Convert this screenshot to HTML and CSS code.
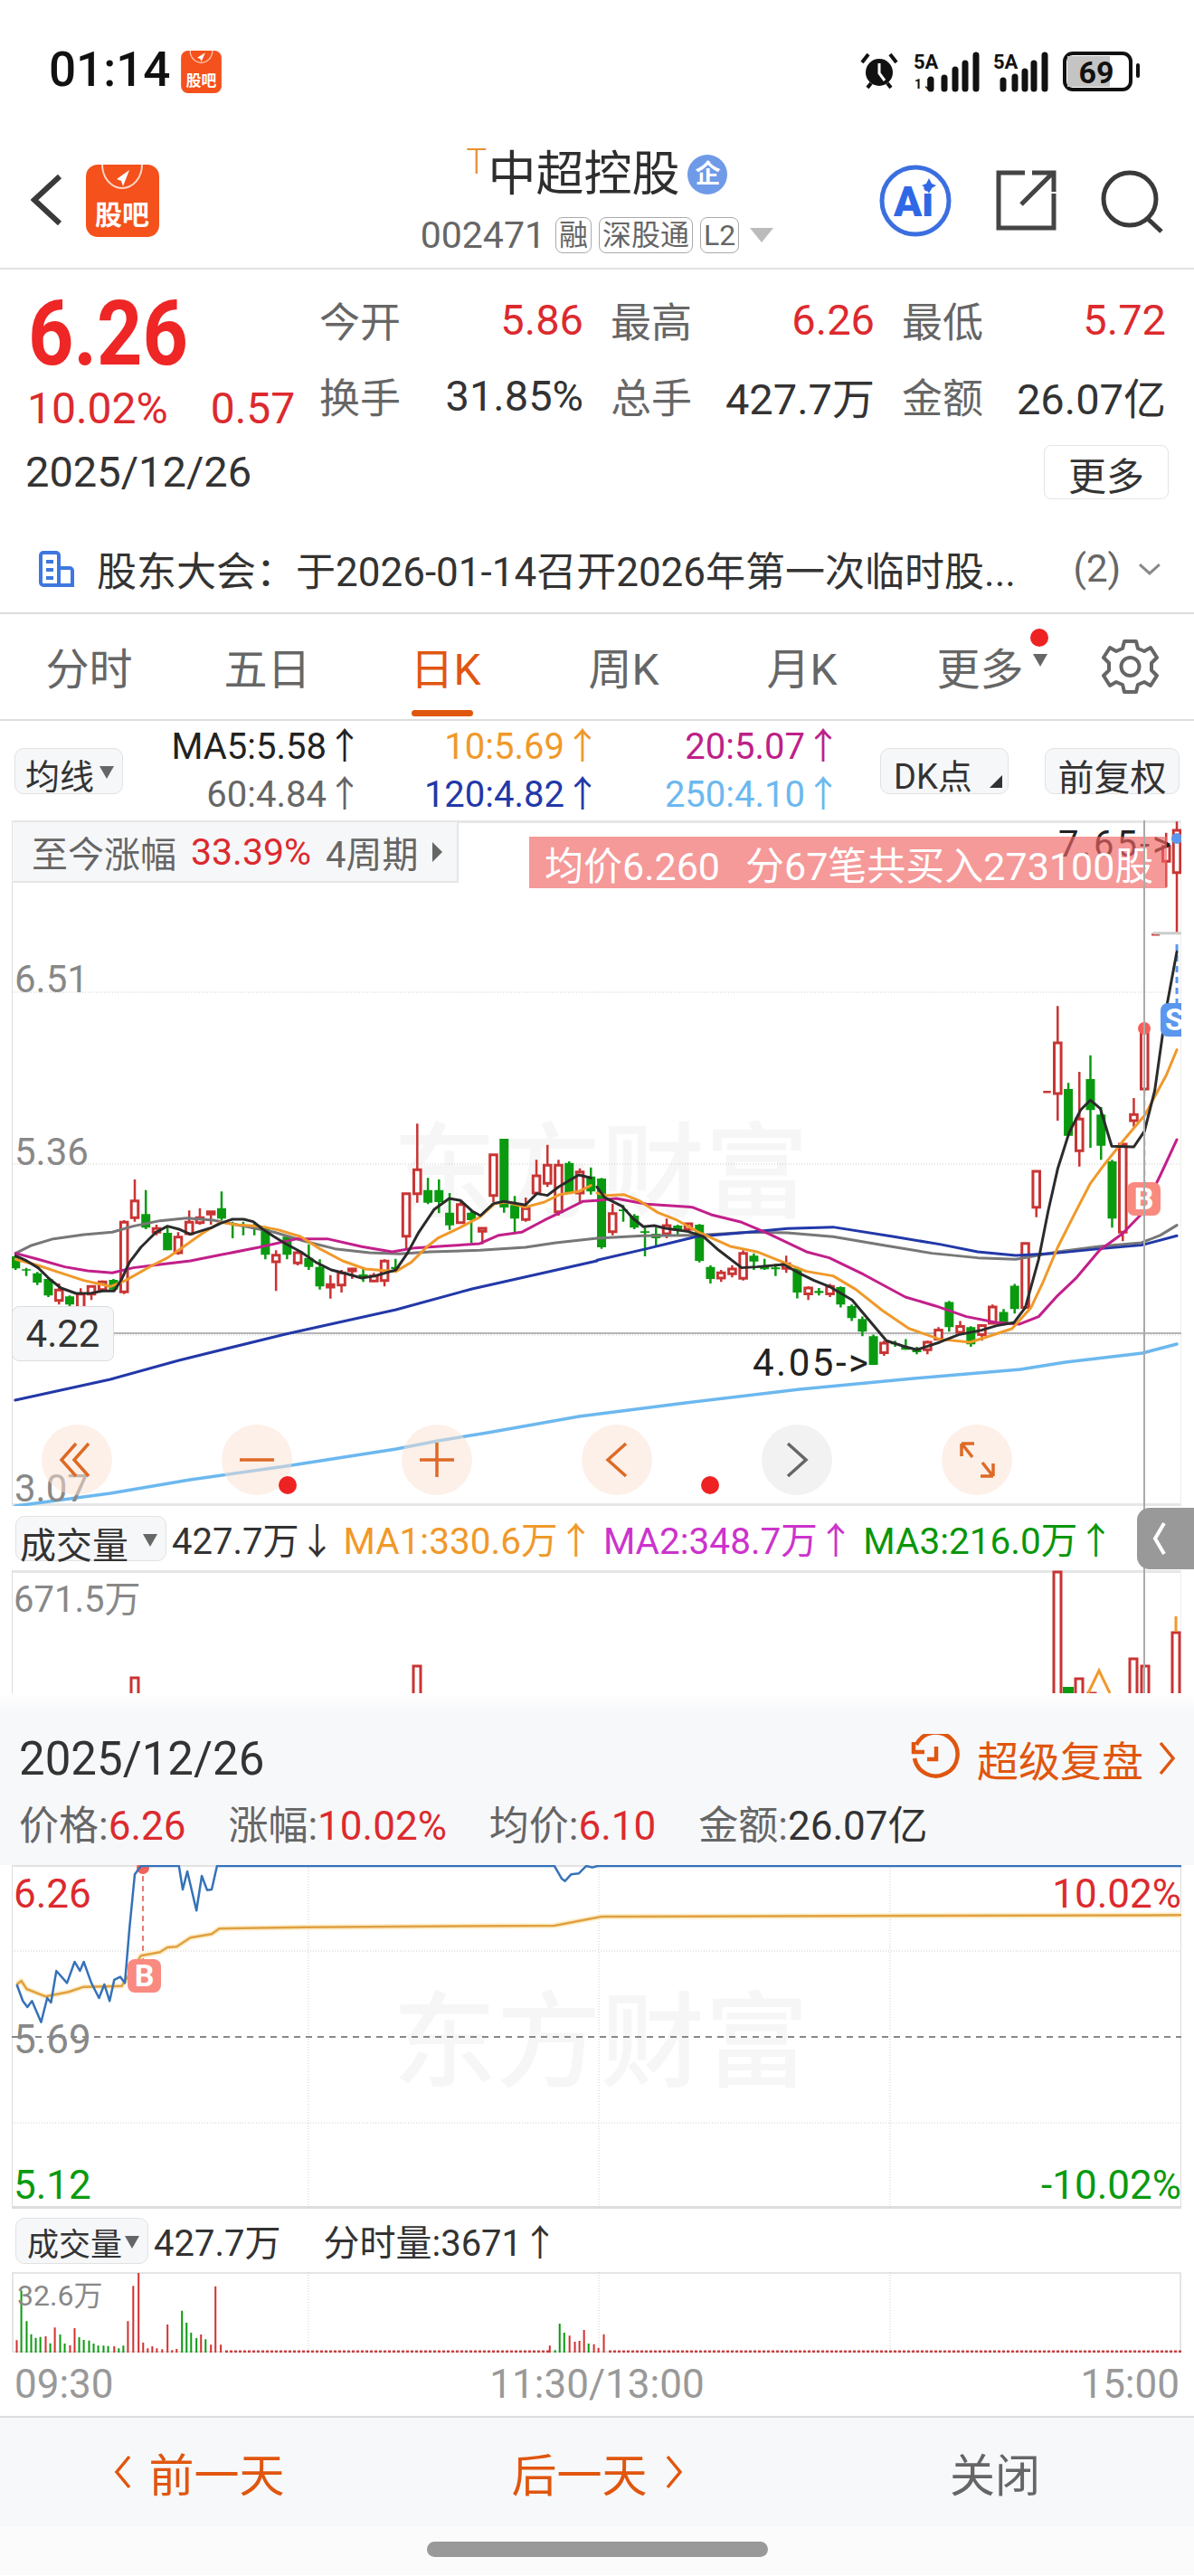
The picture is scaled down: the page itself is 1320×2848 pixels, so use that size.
FILE: index.html
```html
<!DOCTYPE html>
<html lang="zh-CN">
<head>
<meta charset="utf-8">
<title>中超控股</title>
<link rel="stylesheet" href="styles.css">
</head>
<body>
<div class="page">

<div class="status">
  <span class="time">01:14</span>
  <svg class="logo-small" viewBox="0 0 80 84"><rect width="80" height="84" rx="14" fill="#f4511c"/><path d="M18 0a22 24 0 0 0 44 0" class="logo-arc"/><path d="M48 4L32 14l6 2 2 6z" fill="#fff"/><text x="40" y="70" class="logo-text">股吧</text></svg>
  <svg class="status-icons" viewBox="951 55 311 47">
    <circle cx="972" cy="80" r="15" fill="#111"/><path d="M972 70v11l6 8" class="st-w"/><path d="M953 69l7-9M991 69l-7-9M959 97l4-5M985 97l-4-5" class="st-b"/>
    <text x="1010" y="76" class="st-5a">5A</text>
    <text x="1011" y="98" class="st-up">1↓</text>
    <path d="M1029 98V88M1044 98V86M1056 98V77M1067 98V70M1079 98V61" class="st-bar"/>
    <text x="1098" y="76" class="st-5a">5A</text>
    <path d="M1109 98V89M1122 98V85M1133 98V79M1143 98V70M1155 98V61" class="st-bar"/>
    <rect x="1177" y="59" width="73" height="40" rx="9" class="bat"/><path d="M1180 62h47v34h-47z" fill="#c4c4c4"/>
    <text x="1212" y="92" class="st-69">69</text>
    <path d="M1258 72v12" class="st-tip"/>
  </svg>
</div>

<header class="nav">
  <div class="nav-left">
    <svg class="back" viewBox="0 0 36 58"><path d="M32 3L4 29l28 26"/></svg>
    <svg class="logo-big" viewBox="0 0 81 80"><rect width="81" height="80" rx="13" fill="#f4511c"/><path d="M18 0a22 26 0 0 0 44 0" class="logo-arc"/><path d="M48 6L34 16l5 2 2 6z" fill="#fff"/><text x="40" y="66" class="logo-text">股吧</text></svg>
  </div>
  <div class="title-block">
    <div class="title-row"><span class="t-mark">T</span><span class="stock">中超控股</span><span class="qi">企</span></div>
    <div class="sub-row"><span class="code">002471</span><span class="tag">融</span><span class="tag">深股通</span><span class="tag">L2</span><span class="sub-tri"></span></div>
  </div>
  <div class="nav-right">
    <svg class="ai" viewBox="0 0 80 80"><circle cx="40" cy="40" r="37"/><text x="16" y="57" class="ai-text">Ai</text><path d="M55 15l3 6 5 2-5 3-3 6-3-6-5-3 5-2z" class="ai-star"/></svg>
    <svg class="share" viewBox="0 0 68 67"><path d="M32 3H3V64H64V26M28 38L62 4M40 3H64V24"/></svg>
    <svg class="search" viewBox="0 0 70 70"><circle cx="32" cy="32" r="29"/><path d="M52 54l15 14"/></svg>
  </div>
</header>

<section class="quote">
  <div class="q-left">
    <div class="price">6.26</div>
    <div class="chg"><span>10.02%</span><span>0.57</span></div>
    <div class="q-date">2025/12/26</div>
  </div>
  <div class="q-right">
    <div class="stats">
      <div class="stat"><span class="k">今开</span><span class="v up">5.86</span></div>
      <div class="stat"><span class="k">最高</span><span class="v up">6.26</span></div>
      <div class="stat"><span class="k">最低</span><span class="v up">5.72</span></div>
      <div class="stat"><span class="k">换手</span><span class="v">31.85%</span></div>
      <div class="stat"><span class="k">总手</span><span class="v">427.7万</span></div>
      <div class="stat"><span class="k">金额</span><span class="v">26.07亿</span></div>
    </div>
    <button class="more">更多</button>
  </div>
</section>

<div class="notice">
  <svg class="doc" viewBox="0 0 40 41"><path d="M3 6a3 3 0 0 1 3-3h14a3 3 0 0 1 3 3v33H6a3 3 0 0 1-3-3zM23 20h12a3 3 0 0 1 3 3v16H23z"/><path d="M9 13h8M9 22h8M9 31h8"/></svg>
  <span class="notice-text">股东大会：于2026-01-14召开2026年第一次临时股...</span>
  <span class="notice-count">(2)</span>
  <svg class="notice-chev" viewBox="0 0 26 14"><path d="M2 2l11 10L24 2"/></svg>
</div>

<nav class="tabs">
  <span class="tab">分时</span>
  <span class="tab">五日</span>
  <span class="tab active">日K</span>
  <span class="tab">周K</span>
  <span class="tab">月K</span>
  <span class="tab tab-more">更多<i class="more-dot"></i><i class="more-tri"></i></span>
  <svg class="gear" viewBox="-3 0 64 62"><path d="M22 3h13l2 8 7 3 7-4 7 11-6 6v8l6 6-7 11-7-4-7 3-2 8H22l-2-8-7-3-7 4-7-11 6-6v-8l-6-6 7-11 7 4 7-3z"/><circle cx="28.500" cy="31" r="10"/></svg>
</nav>

<div class="ma-row">
  <button class="pill pill-avg">均线<i class="tri"></i></button>
  <div class="ma-grid">
    <span class="c-black">MA5:5.58↑</span><span class="c-orange">10:5.69↑</span><span class="c-mag">20:5.07↑</span>
    <span class="c-grey">60:4.84↑</span><span class="c-blue">120:4.82↑</span><span class="c-sky">250:4.10↑</span>
  </div>
  <button class="pill pill-dk">DK点<i class="corner"></i></button>
  <button class="pill pill-fq">前复权</button>
</div>

<div class="kwrap">
  <div class="kchart">
    <span class="wm wm-k">东方财富</span>
    <svg class="plot" viewBox="13 908 1293 758">
      <path d="M13 1098H1306M13 1288H1306M126 1477H1306" class="grid-dot"/>
      <path d="M126 1475H1306" class="grid-solid"/>
      <g transform="translate(0 1100) scale(.4209 .3333)">
        <path class="w-g" d="M41 868V915M69 908V935M98 922V965M127 940V1005M183 1000V1035M298 945V985M383 650V780M440 770V850M582 655V750M611 755V810M639 755V800M668 755V800M697 770V880M754 800V880M811 830V915M840 880V980M954 912V955M1039 878V915M1124 610V697M1153 615V727M1181 660V782M1238 720V825M1324 480V725M1352 670V790M1495 555V660M1552 575V665"/>
        <path class="b-g" d="M41 870V910M69 913V917M98 926V957M127 945V1000M183 1003V1030M298 948V980M383 730V775M440 792V850M582 710V745M611 760V765M639 765V770M668 770V775M697 775V865M754 805V865M811 875V905M840 905V970M954 930V940M1039 905V912M1124 650V692M1153 650V690M1181 725V767M1238 725V750M1324 480V708M1352 700V745M1495 560V660M1552 605V655"/>
        <path class="w-r" d="M155 960V1030M212 976V1035M240 970V1015M269 950V985M326 750V995M354 615V755M411 765V800M468 790V865M497 718V800M525 710V765M554 720V765M725 850V985M782 850V900M868 932V1010M897 915V990M925 908V945M982 925V955M1010 880V970M1067 660V850M1096 430V692M1210 690V760M1267 775V830M1296 533V690M1381 675V755M1409 550V662M1438 500V640M1467 550V735M1523 578V690"/>
        <path class="b-r" d="M146 982h18V1016h-18zM203 995h18V1060h-18zM231 970h18V995h-18zM260 955h18V980h-18zM317 757h18V988h-18zM345 686h18V742h-18zM402 778h18V790h-18zM459 806h18V858h-18zM488 757h18V795h-18zM516 742h18V758h-18zM545 722h18V730h-18zM716 866h18V888h-18zM773 858h18V892h-18zM859 964h18V972h-18zM888 925h18V965h-18zM916 912h18V918h-18zM973 935h18V952h-18zM1001 886h18V950h-18zM1058 662h18V803h-18zM1087 583h18V662h-18zM1201 698h18V758h-18zM1258 777h18V787h-18zM1287 533h18V668h-18zM1372 712h18V748h-18zM1400 603h18V660h-18zM1429 568h18V628h-18zM1458 568h18V722h-18zM1514 590h18V660h-18z"/>
        <polyline class="ma grey" points="41,860 80,835 140,812 220,798 295,790 350,770 420,752 490,743 560,750 640,770 720,790 800,820 880,845 970,858 1050,862 1130,855 1260,850 1380,840 1460,825 1568,810"/>
        <polyline class="ma navy" points="40,1347 290,1278 470,1215 750,1128 1040,1047 1240,978 1568,885"/>
        <polyline class="ma mag" points="41,860 100,880 170,905 230,918 295,925 350,908 420,897 500,885 580,865 680,840 780,812 860,812 950,838 1030,855 1090,842 1180,835 1260,828 1310,800 1370,790 1430,750 1480,720 1530,688 1568,685"/>
        <polyline class="ma org" points="41,880 100,900 160,925 220,950 290,970 330,950 400,900 440,875 480,840 530,795 580,757 620,765 680,770 730,782 790,805 840,845 900,885 960,912 1040,920 1080,890 1120,840 1150,810 1200,780 1260,740 1300,695 1330,690 1380,707 1430,690 1470,665 1520,655 1552,635"/>
        <polyline class="ma blk" points="41,868 70,885 100,908 130,945 160,975 200,993 240,992 270,985 300,985 320,945 340,890 370,840 410,790 440,770 470,780 500,797 530,785 555,775 580,760 610,747 640,747 665,755 690,780 720,805 750,828 790,855 830,890 870,915 910,928 950,942 985,935 1040,915 1070,860 1100,790 1140,715 1180,678 1210,685 1240,720 1262,735 1296,695 1324,688 1380,700 1410,662 1438,668 1467,640 1520,600 1552,610"/>
      </g>
      <g transform="translate(660 1000) scale(.4209 .3333)">
        <path class="w-g" d="M12 910V1145M69 1000V1055M98 1030V1080M126 1075V1170M155 1075V1135M212 1065V1100M269 1063V1190M298 1200V1260M412 1160V1215M440 1178V1215M469 1195V1235M526 1205V1310M583 1275V1300M640 1270V1340M669 1330V1385M697 1370V1435M726 1430V1530M783 1450V1470M811 1445V1480M840 1470V1495M925 1318V1420M982 1402V1470M1068 1345V1395M1097 1262V1360M1238 595V770M1296 503V810M1324 675V850M1353 850V1075"/>
        <path class="b-g" d="M12 912V1140M69 1015V1020M98 1035V1075M126 1087V1092M155 1095V1110M212 1068V1085M269 1065V1185M298 1205V1245M412 1168V1187M440 1205V1213M469 1207V1213M526 1210V1290M583 1285V1292M640 1272V1330M669 1335V1375M697 1378V1420M726 1435V1530M783 1458V1462M811 1470V1480M840 1478V1488M925 1322V1405M982 1405V1462M1068 1355V1392M1097 1268V1345M1238 615V770M1296 582V685M1324 700V803M1353 855V1045"/>
        <path class="w-r" d="M41 995V1100M183 1045V1110M240 1060V1090M326 1215V1255M355 1200V1240M384 1150V1250M497 1168V1225M555 1270V1315M612 1262V1305M754 1450V1500M868 1450V1495M897 1405V1450M954 1385V1430M1011 1395V1450M1039 1330V1395M1125 1125V1345M1154 885V1040M1172 625H1192M1210 340V720M1267 558V872M1381 795V1120M1410 645V740M1438 415V620M1457 103H1478M1495 -235V-55M1523 -272V95"/>
        <path class="b-r" d="M32 1028h18V1088h-18zM174 1068h18V1095h-18zM231 1062h18V1080h-18zM317 1225h18V1242h-18zM346 1212h18V1228h-18zM375 1160h18V1243h-18zM488 1195h18V1210h-18zM546 1275h18V1295h-18zM603 1270h18V1295h-18zM745 1458h18V1490h-18zM859 1455h18V1480h-18zM888 1415h18V1445h-18zM945 1403h18V1422h-18zM1002 1400h18V1430h-18zM1030 1338h18V1392h-18zM1116 1127h18V1340h-18zM1145 888h18V1007h-18zM1201 462h18V630h-18zM1258 715h18V820h-18zM1372 798h18V1090h-18zM1401 700h18V720h-18zM1429 420h18V615h-18zM1486 -190h18V-140h-18zM1514 -243h18V-103h-18z"/>
        <path class="w-dash" d="M1438 620V925"/>
        <path class="g-tick" d="M1460 98H1535"/>
        <path class="b-dash" d="M1523 135V330"/>
        <polyline class="ma grey" points="0,1110 120,1102 260,1100 400,1090 500,1092 620,1105 760,1135 880,1160 1000,1175 1100,1180 1210,1155 1320,1137 1430,1125 1480,1100 1523,1067"/>
        <polyline class="ma navy" points="0,1183 130,1145 260,1105 400,1090 500,1078 620,1073 780,1105 900,1130 1000,1155 1100,1167 1200,1160 1320,1145 1430,1133 1523,1102"/>
        <polyline class="ma mag" points="0,985 50,978 130,997 250,1007 300,1032 380,1057 450,1095 550,1155 610,1175 700,1230 810,1305 890,1335 970,1370 1050,1390 1110,1395 1160,1370 1210,1300 1260,1240 1320,1150 1380,1095 1430,1030 1480,900 1523,783"/>
        <polyline class="ma org" points="0,960 25,968 70,965 110,985 160,1025 210,1050 270,1092 350,1137 420,1155 490,1190 550,1220 620,1235 680,1280 750,1350 820,1410 900,1445 980,1455 1030,1435 1090,1410 1140,1340 1170,1260 1210,1140 1250,1040 1295,930 1330,870 1380,790 1440,700 1465,640 1495,570 1523,485"/>
        <polyline class="ma blk" points="0,940 20,975 65,1003 95,1045 122,1072 150,1068 180,1077 240,1088 280,1105 320,1150 380,1208 420,1205 490,1197 530,1225 570,1250 610,1270 670,1315 720,1390 760,1450 810,1470 840,1480 900,1455 950,1430 1010,1415 1050,1400 1095,1390 1125,1340 1160,1180 1185,1020 1210,880 1240,760 1270,685 1296,652 1322,680 1352,805 1410,807 1438,755 1465,620 1495,350 1523,160"/>
      </g>
      <polyline class="ma sky" points="17,1666 122,1652 210,1637 316,1622 438,1603 484,1594 539,1585 640,1567 758,1552 884,1537 1010,1525 1128,1515 1178,1507 1263,1497 1301,1487"/>
      <circle cx="1265" cy="1138" r="7" class="dot-red"/>
      <circle cx="1301" cy="928" r="6" class="dot-blue"/>
    </svg>

    <span class="axis a651">6.51</span>
    <span class="axis a536">5.36</span>
    <span class="axis a307">3.07</span>
    <span class="price-box">4.22</span>
    <span class="mark m405">4.05-&gt;</span>
    <span class="mark m765">7.65-&gt;</span>
    <div class="gain"><span class="gain-k">至今涨幅</span><span class="gain-v">33.39%</span><span class="gain-k">4周期</span><i class="gain-tri"></i></div>
    <div class="banner"><span>均价6.260</span><span>分67笔共买入273100股</span></div>
    <span class="badge badge-b">B</span>
    <span class="badge badge-s">S</span>

    <div class="zoombar">
      <span class="zb"><svg viewBox="0 0 78 78"><path d="M38 21L22 39l16 18M52 21L36 39l16 18"/></svg></span>
      <span class="zb"><svg viewBox="0 0 78 78"><path d="M20 39h38"/></svg><i class="zb-dot"></i></span>
      <span class="zb"><svg viewBox="0 0 78 78"><path d="M20 39h38M39 20v38"/></svg></span>
      <span class="zb"><svg viewBox="0 0 78 78"><path d="M49 21L29 39l20 18"/></svg><i class="zb-dot zb-dot2"></i></span>
      <span class="zb zb-off"><svg viewBox="0 0 78 78"><path d="M29 21l20 18-20 18"/></svg></span>
      <span class="zb"><svg viewBox="0 0 78 78"><path d="M22 21h14M22 21v14M23 22l11 14M57 57H43M57 57V43M56 56L45 42"/></svg></span>
    </div>
  </div>

  <div class="vol-head">
    <button class="pill pill-vol">成交量<i class="tri"></i></button>
    <span class="c-dark">427.7万↓</span>
    <span class="c-orange">MA1:330.6万↑</span>
    <span class="c-vmag">MA2:348.7万↑</span>
    <span class="c-vgreen">MA3:216.0万↑</span>
  </div>

  <div class="vol">
    <span class="axis vol-max">671.5万</span>
    <svg class="plot" viewBox="13 1737 1293 136">
      <path class="b-r" d="M145 1856h8V1880h-8zM457 1843h8V1880h-8zM1165 1739h8V1880h-8zM1189 1857h8V1880h-8zM1203 1873h8V1880h-8zM1249 1835h8V1880h-8zM1262 1843h8V1880h-8zM1296 1806h8V1880h-8z"/>
      <path class="vb-g" d="M1181 1866V1873"/>
      <path class="v-ma" d="M1203 1873l12-25 12 25M1300 1805v-17"/>
    </svg>
  </div>

  <i class="cursor-line"></i>
  <span class="collapse"><svg viewBox="0 0 20 40"><path d="M15 3L5 20l10 17"/></svg></span>
</div>

<section class="sheet">
  <div class="sheet-top">
    <span class="sheet-date">2025/12/26</span>
    <span class="replay">
      <svg class="clock" viewBox="0 0 54 54"><path d="M6 12a24 24 0 1 1-2 15M3 9v11h12M28 14v14H18"/></svg>
      超级复盘
      <svg class="replay-chev" viewBox="0 0 20 40"><path d="M3 3l14 17L3 37"/></svg>
    </span>
  </div>
  <div class="sheet-row">
    <span><em>价格:</em><b class="up">6.26</b></span>
    <span><em>涨幅:</em><b class="up">10.02%</b></span>
    <span><em>均价:</em><b class="up">6.10</b></span>
    <span><em>金额:</em><b>26.07亿</b></span>
  </div>
</section>

<div class="mini">
  <span class="wm wm-mini">东方财富</span>
  <svg class="plot" viewBox="13 2063 1293 380">
    <path d="M341 2063V2443M662 2063V2443M984 2063V2443M13 2158H1306M13 2348H1306" class="grid-dot"/>
    <path d="M13 2253H1306" class="grid-dash"/>
    <path d="M158 2064V2167" class="w-dash"/>
    <circle cx="158" cy="2066" r="7" class="dot-red"/>
    <g transform="translate(0 1900) scale(.8418 .3333)">
      <polyline class="avg-glow" points="22,885 28,873 35,900 60,925 90,910 110,893 160,890 185,790 210,778 220,762 232,760 250,730 278,718 288,700 400,695 728,690 790,660 1552,655"/>
      <polyline class="avg-line" points="22,885 28,873 35,900 60,925 90,910 110,893 160,890 185,790 210,778 220,762 232,760 250,730 278,718 288,700 400,695 728,690 790,660 1552,655"/>
      <polyline class="price-line" points="22,885 30,940 36,960 42,940 54,1010 62,930 67,945 74,840 88,880 98,810 105,840 110,810 120,880 130,930 137,885 144,940 150,870 158,860 164,880 170,700 177,520 185,492 235,492 240,570 246,510 258,640 265,525 272,572 278,570 285,492 728,492 738,535 742,542 750,520 760,517 770,492 778,497 785,492 1552,492"/>
    </g>
  </svg>
  <span class="lbl lbl-top up">6.26</span>
  <span class="lbl lbl-top lbl-r up">10.02%</span>
  <span class="lbl lbl-mid">5.69</span>
  <span class="lbl lbl-bot down">5.12</span>
  <span class="lbl lbl-bot lbl-r down">-10.02%</span>
  <span class="badge badge-mini">B</span>
</div>

<div class="vol2-head">
  <button class="pill pill-vol2">成交量<i class="tri"></i></button>
  <span>427.7万</span>
  <span>分时量:3671↑</span>
</div>

<div class="vol2">
  <span class="axis vol2-max">32.6万</span>
  <svg class="plot" viewBox="13 2513 1293 89">
    <path d="M341 2513V2602M662 2513V2602M984 2513V2602" class="grid-dot"/>
    <path d="M249 2601H608M673 2601H1306" class="v-base"/>
    <g transform="translate(0 2400) scale(.8418 .3333)">
      <path class="vr" d="M22 606V565M72 606V523M92 606V582M98 606V525M150 606V585M168 606V502M175 606V385M182 606V342M188 606V573M194 606V592M200 606V585M206 606V592M213 606V595M220 606V513M226 606V598M232 606V594M264 606V546M277 606V580M283 606V386M290 606V580M60 606V552M722 606V583M767 606V531M748 606V550M755 606V570M761 606V567M780 606V578M786 606V590M793 606V545"/>
      <path class="vg" d="M28 606V400M35 606V502M41 606V545M47 606V557M53 606V554M66 606V575M79 606V546M85 606V576M104 606V555M110 606V564M117 606V566M123 606V576M129 606V583M136 606V583M142 606V584M156 606V592M162 606V583M239 606V467M245 606V507M251 606V540M258 606V558M270 606V562M729 606V598M735 606V510M741 606V540M773 606V576"/>
    </g>
  </svg>
</div>

<div class="times"><span>09:30</span><span>11:30/13:00</span><span>15:00</span></div>

<footer class="actions">
  <span class="act act-on"><svg class="act-chev" viewBox="0 0 20 40"><path d="M17 3L3 20l14 17"/></svg>前一天</span>
  <span class="act act-on">后一天<svg class="act-chev" viewBox="0 0 20 40"><path d="M3 3l14 17L3 37"/></svg></span>
  <span class="act">关闭</span>
</footer>
<div class="home"><i class="home-bar"></i></div>

</div>
</body>
</html>
```
FILE: styles.css
```css
* { box-sizing: border-box; }
html, body { margin: 0; padding: 0; background: #fff; }
.page { width: 1320px; height: 2848px; overflow: hidden; font-family: Roboto, "Noto Sans CJK SC", sans-serif; color: #333; }
i { font-style: normal; display: block; }
em { font-style: normal; }
button { font: inherit; padding: 0; margin: 0; color: inherit; }
svg { display: block; }
.up { color: #dc2a2e; }
.down { color: #0a9a10; }

/* status */
.status { height: 154px; display: flex; align-items: center; padding: 0 0 0 54px; }
.time { font-size: 53px; font-weight: 500; color: #111; width: 146px; }
.logo-small { width: 45px; height: 47px; margin-top: 4px; }
.logo-arc { fill: none; stroke: #ffd9c8; stroke-width: 2; }
.logo-text { font-size: 30px; fill: #fff; text-anchor: middle; font-weight: 700; font-family: "Noto Sans CJK SC", sans-serif; }
.status-icons { width: 311px; height: 47px; margin-left: auto; margin-right: 58px; margin-top: 3px; }
.st-w { fill: none; stroke: #fff; stroke-width: 3; }
.st-b { fill: none; stroke: #111; stroke-width: 4; }
.st-5a { font-size: 22px; font-weight: 700; fill: #111; }
.st-up { font-size: 14px; font-weight: 700; fill: #111; }
.st-bar { fill: none; stroke: #111; stroke-width: 7; stroke-linecap: round; }
.bat { fill: #fff; stroke: #111; stroke-width: 4; }
.st-69 { font-size: 34px; font-weight: 700; fill: #111; text-anchor: middle; }
.st-tip { stroke: #111; stroke-width: 4; stroke-linecap: round; }

/* nav */
.nav { height: 144px; display: grid; grid-template-columns: 1fr auto 1fr; border-bottom: 2px solid #e2e2e2; }
.nav-left { display: flex; padding: 28px 0 0 34px; }
.back { width: 36px; height: 58px; margin-top: 10px; }
.back path { fill: none; stroke: #3a3a3a; stroke-width: 6; }
.logo-big { width: 81px; height: 80px; margin-left: 25px; }
.title-block { display: flex; flex-direction: column; align-items: center; padding-top: 10px; }
.title-row { display: flex; align-items: center; height: 58px; position: relative; padding-left: 24px; }
.t-mark { position: absolute; left: 0; top: -4px; font-size: 38px; line-height: 38px; font-weight: 300; color: #e8912d; }
.stock { font-size: 53px; line-height: 58px; color: #2e2e2e; }
.qi { width: 44px; height: 44px; border-radius: 50%; background: #6f9ae8; color: #fff; font-size: 28px; line-height: 44px; text-align: center; margin-left: 9px; font-weight: 700; }
.sub-row { display: flex; align-items: center; margin-top: 18px; height: 40px; }
.code { font-size: 41px; color: #666; margin-right: 11px; }
.tag { font-size: 32px; line-height: 38px; height: 40px; padding: 0 3px; border: 1px solid #aaa; border-radius: 8px; color: #666; margin-right: 8px; }
.sub-tri { width: 0; height: 0; border-left: 13px solid transparent; border-right: 13px solid transparent; border-top: 16px solid #bbb; margin-left: 4px; }
.nav-right { display: flex; justify-content: flex-end; align-items: flex-start; padding: 28px 33px 0 0; }
.ai { width: 80px; height: 80px; }
.ai circle { fill: #fff; stroke: #3b6fe0; stroke-width: 5; }
.ai-text { font-size: 46px; font-weight: 900; fill: #2f68e6; }
.ai-star { fill: #2f68e6; }
.share { width: 68px; height: 67px; margin: 6px 0 0 49px; }
.share path { fill: none; stroke: #444; stroke-width: 5; }
.search { width: 70px; height: 70px; margin: 6px 0 0 48px; }
.search circle, .search path { fill: none; stroke: #3a3a3a; stroke-width: 5; }

/* quote */
.quote { height: 282px; display: flex; padding: 0 28px 0 28px; }
.q-left { width: 325px; }
.price { font-size: 100px; line-height: 100px; font-weight: 700; color: #ee2626; margin-top: 21px; transform: scaleX(.88); transform-origin: left center; margin-left: 3px; }
.chg { display: flex; gap: 47px; font-size: 48px; line-height: 52px; color: #dc2a2e; margin-top: 7px; padding-left: 2px; }
.q-date { font-size: 47px; line-height: 52px; margin-top: 18px; }
.q-right { flex: 1; padding-top: 13px; display: flex; flex-direction: column; }
.stats { display: grid; grid-template-columns: repeat(3, 292px); column-gap: 30px; grid-auto-rows: 84px; }
.stat { display: flex; justify-content: space-between; align-items: center; }
.k { font-size: 45px; color: #666; }
.v { font-size: 47px; color: #333; }
.v.up { color: #dc2a2e; }
.more { width: 138px; height: 60px; border: 1px solid #e4e4e4; border-radius: 8px; background: #fff; font-size: 42px; color: #333; margin: 13px 0 0 auto; }

/* notice */
.notice { height: 99px; display: flex; align-items: center; padding: 0 36px 0 42px; border-bottom: 2px solid #ddd; position: relative; }
.doc { width: 40px; height: 41px; flex: none; }
.doc path { fill: none; stroke: #3f77e0; stroke-width: 4; }
.notice-text { font-size: 44px; margin-left: 25px; color: #333; white-space: nowrap; width: 1087px; }
.notice-count { font-size: 42px; color: #666; }
.notice-chev { width: 26px; height: 14px; margin-left: 19px; }
.notice-chev path { fill: none; stroke: #888; stroke-width: 3; }

/* tabs */
.tabs { height: 118px; display: flex; align-items: center; border-bottom: 2px solid #ddd; position: relative; }
.tab { width: 197px; text-align: center; font-size: 48px; color: #666; position: relative; padding-bottom: 2px; }
.tab.active { color: #e0560f; }
.tab.active::after { content: ""; position: absolute; left: 61px; bottom: -19px; width: 68px; height: 7px; border-radius: 4px; background: #e0560f; }
.more-dot { position: absolute; left: 154px; top: -6px; width: 20px; height: 20px; border-radius: 50%; background: #ee2222; }
.more-tri { position: absolute; left: 157px; top: 22px; width: 0; height: 0; border-left: 8px solid transparent; border-right: 8px solid transparent; border-top: 14px solid #666; }
.gear { width: 64px; height: 62px; margin: 0 0 0 36px; }
.gear path, .gear circle { fill: none; stroke: #666; stroke-width: 4; stroke-linejoin: round; }

/* ma row */
.ma-row { height: 110px; display: flex; align-items: center; padding-left: 16px; }
.pill { background: #f6f7f9; border: 1px solid #e2e2e2; border-radius: 10px; font-size: 38px; color: #333; height: 51px; position: relative; flex: none; }
.pill-avg { width: 120px; text-align: left; padding-left: 11px; }
.tri { position: absolute; right: 9px; top: 19px; width: 0; height: 0; border-left: 8px solid transparent; border-right: 8px solid transparent; border-top: 14px solid #666; }
.ma-grid { display: grid; grid-template-columns: 265px 263px 266px; grid-auto-rows: 53px; justify-items: end; font-size: 40px; line-height: 53px; }
.c-black { color: #222; }
.c-orange { color: #f0992a; }
.c-mag { color: #bd2187; }
.c-grey { color: #666; }
.c-blue { color: #2238a8; }
.c-sky { color: #6cb8ef; }
.pill-dk { width: 142px; margin-left: 43px; text-align: left; padding-left: 14px; }
.corner { position: absolute; right: 6px; bottom: 6px; width: 0; height: 0; border-left: 14px solid transparent; border-bottom: 14px solid #333; }
.pill-fq { width: 149px; margin-left: 40px; font-size: 40px; }

/* k chart */
.kwrap { position: relative; height: 965px; }
.kchart { position: relative; margin-left: 13px; width: 1293px; height: 758px; overflow: hidden; box-shadow: inset 1px 0 #ddd, inset -1px 0 #eee, inset 0 3px #e6e6e6, inset 0 -3px #e6e6e6; }
.plot { position: absolute; left: 0; top: 0; width: 100%; height: 100%; }
.wm { position: absolute; font-weight: 500; color: #f6f6f6; font-family: "Noto Sans CJK SC", sans-serif; white-space: nowrap; font-size: 115px; line-height: 116px; }
.wm-k { left: 421px; top: 322px; }
.grid-dot { fill: none; stroke: #ccc; stroke-width: 1; stroke-dasharray: 1 2; }
.grid-solid { fill: none; stroke: #b5b5b5; stroke-width: 2; }
.grid-dash { fill: none; stroke: #888; stroke-width: 2; stroke-dasharray: 7 6; }
.w-g, .w-r, .b-g, .b-r, .ma, .w-dash, .b-dash, .g-tick, .vr, .vg, .price-line, .avg-line, .avg-glow { vector-effect: non-scaling-stroke; fill: none; }
.w-g { stroke: #0a9a10; stroke-width: 2.500; }
.b-g { stroke: #0a9a10; stroke-width: 10; }
.w-r { stroke: #c93434; stroke-width: 2.500; }
.b-r { stroke: #c93434; stroke-width: 3; fill: #fff; vector-effect: non-scaling-stroke; }
.w-dash { stroke: #e87a72; stroke-width: 2; stroke-dasharray: 6 5; }
.b-dash { stroke: #5b97ee; stroke-width: 3; stroke-dasharray: 7 5; }
.g-tick { stroke: #ccc; stroke-width: 3; }
.ma { stroke-width: 3; stroke-linejoin: round; stroke-linecap: round; }
.ma.blk { stroke: #2b2b2b; }
.ma.org { stroke: #f0992a; }
.ma.mag { stroke: #c21f8a; }
.ma.grey { stroke: #777; }
.ma.navy { stroke: #2238a8; }
.ma.sky { stroke: #6cb8ef; stroke-width: 3.500; }
.dot-red { fill: #f4605a; }
.dot-blue { fill: #5b97ee; }
.axis { position: absolute; left: 3px; font-size: 42px; line-height: 52px; color: #888; }
.a651 { top: 150px; }
.a536 { top: 341px; }
.a307 { top: 720px; line-height: 38px; }
.price-box { position: absolute; left: 0; top: 537px; width: 113px; height: 61px; line-height: 59px; text-align: center; font-size: 42px; color: #333; background: #f6f7f9; border: 1px solid #ddd; border-radius: 8px; }
.mark { position: absolute; font-size: 40px; line-height: 52px; color: #222; white-space: nowrap; }
.m405 { left: 819px; top: 574px; font-size: 42px; letter-spacing: 2.500px; }
.m765 { left: 1157px; top: 1px; letter-spacing: 3px; }
.gain { position: absolute; left: 0; top: 0; width: 494px; height: 69px; display: flex; align-items: center; padding: 0 0 0 21px; background: #f6f7f9; border: 2px solid #e6e6e6; border-left-width: 1px; font-size: 40px; }
.gain-k { color: #666; }
.gain-v { color: #dc2a2e; margin: 0 16px 0 16px; font-size: 41px; }
.gain-tri { width: 0; height: 0; border-top: 11px solid transparent; border-bottom: 11px solid transparent; border-left: 11px solid #666; margin-left: 15px; }
.banner { position: absolute; left: 572px; top: 18px; width: 705px; height: 57px; display: flex; align-items: center; gap: 28px; padding-left: 17px; background: rgba(240, 100, 100, .66); color: #fff; font-size: 43px; white-space: nowrap; overflow: hidden; }
.badge { position: absolute; width: 37px; height: 37px; border-radius: 8px; background: #f98a80; color: #fff; font-size: 34px; line-height: 37px; font-weight: 700; text-align: center; }
.badge-b { left: 1233px; top: 400px; }
.badge-s { left: 1270px; top: 202px; background: #5b97ee; text-align: left; padding-left: 5px; }
.badge-mini { left: 128px; top: 104px; }
.zoombar { position: absolute; left: 33px; top: 668px; display: flex; gap: 121px; }
.zb { width: 78px; height: 78px; border-radius: 50%; background: rgba(252, 226, 210, .5); position: relative; display: block; }
.zb svg { width: 78px; height: 78px; }
.zb path { fill: none; stroke: #dd6a26; stroke-width: 3.500; }
.zb-off { background: rgba(230, 230, 230, .5); }
.zb-off path { stroke: #666; }
.zb-dot { position: absolute; left: 63px; top: 57px; width: 20px; height: 20px; border-radius: 50%; background: #ee2222; }
.zb-dot2 { left: 132px; }

.vol-head { height: 71px; display: flex; align-items: center; gap: 10px; padding-left: 17px; font-size: 40.500px; white-space: nowrap; }
.pill-vol { width: 167px; height: 50px; text-align: left; padding-left: 4px; font-size: 40px; }
.pill-vol + span { margin-left: -4px; margin-right: -1px; font-size: 40px; }
.c-dark { color: #333; }
.c-vmag { color: #cc33cc; }
.c-vgreen { color: #0a960a; }
.vol { position: relative; margin-left: 13px; width: 1293px; height: 136px; overflow: hidden; box-shadow: inset 1px 0 #ddd, inset -1px 0 #eee, inset 0 3px #e6e6e6; }
.vol-max { left: 2px; top: 7px; z-index: 1; font-size: 40px; }
.vb-g { stroke: #0a9a10; stroke-width: 12; fill: none; }
.v-ma { fill: none; stroke: #f0992a; stroke-width: 3; }
.cursor-line { position: absolute; left: 1264px; top: 0; width: 2px; height: 965px; background: #aaa; }
.collapse { position: absolute; left: 1257px; top: 760px; width: 63px; height: 68px; background: #999; border-radius: 14px 0 0 14px; display: flex; align-items: center; padding-left: 15px; }
.collapse svg { width: 20px; height: 40px; }
.collapse path { fill: none; stroke: #fff; stroke-width: 4; }

/* sheet */
.sheet { height: 190px; padding: 46px 20px 0 21px; background: linear-gradient(#fff, #f7f8fa 22px); }
.sheet-top { display: flex; justify-content: space-between; align-items: center; height: 52px; }
.sheet-date { font-size: 51px; color: #333; }
.replay { display: flex; align-items: center; font-size: 46px; color: #e0560f; }
.clock { width: 54px; height: 54px; margin-right: 19px; }
.clock path { fill: none; stroke: #e0560f; stroke-width: 4.500; }
.replay-chev { width: 20px; height: 40px; margin-left: 16px; }
.replay-chev path { fill: none; stroke: #e0560f; stroke-width: 3.500; }
.sheet-row { display: flex; gap: 47px; margin-top: 23px; font-size: 44px; line-height: 52px; }
.sheet-row em { color: #666; }
.sheet-row b { font-weight: 400; }

/* mini chart */
.mini { position: relative; margin-left: 13px; width: 1293px; height: 380px; overflow: hidden; box-shadow: inset 1px 0 #ddd, inset -1px 0 #ddd, inset 0 -3px #ddd, inset 0 2px #e2e2e2; }
.wm-mini { left: 421px; top: 128px; }
.price-line { stroke: #3572b8; stroke-width: 2.500; stroke-linejoin: round; }
.avg-line { stroke: #e0a040; stroke-width: 2.500; stroke-linejoin: round; }
.avg-glow { stroke: #fdeecb; stroke-width: 6; stroke-linejoin: round; }
.lbl { position: absolute; font-size: 44px; line-height: 52px; left: 2px; }
.lbl-top { top: 6px; }
.lbl-mid { top: 167px; color: #888; }
.lbl-bot { top: 328px; }
.lbl-r { left: auto; right: 0; }

.vol2-head { height: 70px; display: flex; align-items: center; padding-left: 17px; font-size: 40px; color: #333; gap: 47px; white-space: nowrap; }
.pill-vol2 { width: 147px; height: 51px; text-align: left; padding-left: 12px; font-size: 35px; margin-right: -41px; }
.vol2 { position: relative; margin-left: 13px; width: 1293px; height: 89px; overflow: hidden; box-shadow: inset 0 0 0 2px #e5e5e5; }
.vol2-max { left: 6px; top: 0; font-size: 32px; z-index: 1; }
.vr { stroke: #d23030; stroke-width: 2; }
.vg { stroke: #0a9a10; stroke-width: 2; }
.v-base { fill: none; stroke: #c94040; stroke-width: 3; stroke-dasharray: 3 2; }
.times { height: 70px; display: flex; justify-content: space-between; align-items: center; padding: 0 16px; font-size: 44px; color: #999; }

.actions { height: 122px; display: grid; grid-template-columns: repeat(3, 1fr); background: #f7f8fa; border-top: 2px solid #ddd; }
.act { display: flex; justify-content: center; align-items: center; gap: 19px; font-size: 50px; color: #666; }
.act-on { color: #e0560f; }
.act-chev { width: 20px; height: 40px; }
.act-chev path { fill: none; stroke: #e0560f; stroke-width: 3.500; }
.home { height: 54px; background: #fbfbfb; padding-top: 17px; display: flex; justify-content: center; }
.home-bar { width: 377px; height: 17px; border-radius: 9px; background: #999; }
```
